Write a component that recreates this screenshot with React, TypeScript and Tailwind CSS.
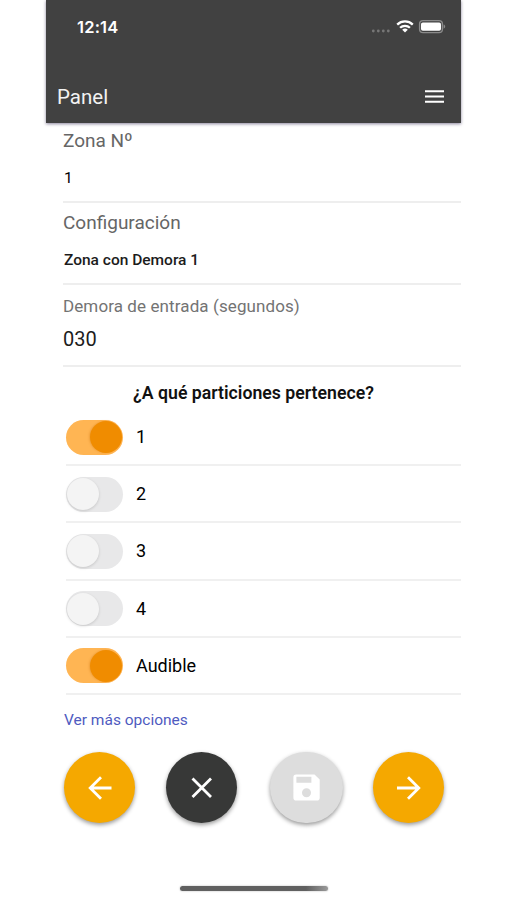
import React, { useState } from 'react';

const initialPartitions = [
  { id: 'p1', label: '1', enabled: true },
  { id: 'p2', label: '2', enabled: false },
  { id: 'p3', label: '3', enabled: false },
  { id: 'p4', label: '4', enabled: false },
  { id: 'audible', label: 'Audible', enabled: true },
];

const StatusBar = () => (
  <div className="flex items-center justify-between h-[53px] pl-[31px] pr-[15px]">
    <span className="font-['Inter',sans-serif] text-[16.5px] leading-5 font-semibold tracking-[0.2px]">12:14</span>
    <div className="flex items-center">
      <svg className="w-5 h-4 mr-[5px]" viewBox="0 0 20 16" fill="#777">
        <circle cx="2.3" cy="12" r="1.4" />
        <circle cx="7.3" cy="12" r="1.4" />
        <circle cx="12.3" cy="12" r="1.4" />
        <circle cx="17.3" cy="12" r="1.4" />
      </svg>
      <svg className="w-[18px] h-4 mr-1" viewBox="0 0 18 16" fill="none" stroke="#fff" strokeWidth="2.3">
        <path d="M1.2 5.6a11.2 11.2 0 0 1 15.6 0" />
        <path d="M4.1 8.8a7 7 0 0 1 9.8 0" />
        <path d="M9 13.5l-2.8-2.7a4 4 0 0 1 5.6 0z" fill="#fff" stroke="none" />
      </svg>
      <svg className="w-7 h-4" viewBox="0 0 28 16">
        <rect x="1.6" y="1.6" width="22.8" height="12" rx="3.4" fill="none" stroke="#8a8a8a" strokeWidth="1.4" />
        <rect x="3" y="3.4" width="20" height="8.4" rx="1.8" fill="#fff" />
        <path d="M25.6 5.5v4.2c.9-.3 1.6-1.1 1.6-2.1s-.7-1.8-1.6-2.1z" fill="#8a8a8a" />
      </svg>
    </div>
  </div>
);

const Toggle = ({ checked, onClick }: { checked: boolean; onClick: () => void }) => (
  <button
    role="switch"
    aria-checked={checked}
    onClick={onClick}
    className={`flex items-center w-[57px] h-[35px] rounded-full px-px ${
      checked ? 'bg-[#ffb553] justify-end' : 'bg-[#e8e8e9] justify-start'
    }`}
  >
    <span
      className={`w-[32px] h-[32px] rounded-full ${
        checked ? 'bg-[#f08c00] shadow-[-1px_0_2px_rgba(200,110,0,0.3)]' : 'bg-[#f4f4f4] shadow-[0_1px_3px_rgba(0,0,0,0.15)]'
      }`}
    />
  </button>
);

const App = () => {
  const [partitions, setPartitions] = useState(initialPartitions);

  const togglePartition = (id: string) => {
    setPartitions(partitions.map((p) => (p.id === id ? { ...p, enabled: !p.enabled } : p)));
  };

  return (
    <div className="h-[900px] bg-white flex justify-center overflow-hidden font-['Roboto',sans-serif] text-[#1c1c1c]">
      <div className="w-[415px] h-full flex flex-col">
        {/* Header */}
        <header className="h-[122.5px] shrink-0 bg-[#414141] text-white shadow-[0_1px_3px_rgba(60,50,90,0.6)]">
          <StatusBar />
          <div className="flex items-center justify-between h-[69px] pt-[18px] pl-[11px] pr-[17px]">
            <h1 className="text-[20.5px] leading-6 text-[#f2f2f2]">Panel</h1>
            <button aria-label="Menu">
              <svg className="w-5 h-4" viewBox="0 0 20 16" stroke="#fff" strokeWidth="2">
                <path d="M1 2.2h19M1 7.4h19M1 12.7h19" />
              </svg>
            </button>
          </div>
        </header>

        {/* Zone fields */}
        <div className="pl-[17px]">
          <div className="h-[80.5px] pt-[6px] border-b-2 border-[#eeeeee]">
            <p className="text-[19px] leading-6 text-[#666]">Zona Nº</p>
            <p className="pt-[15px] pl-px text-[15.5px] leading-5 text-black">1</p>
          </div>
          <div className="h-[82px] pt-[8px] border-b-2 border-[#eeeeee]">
            <p className="text-[19px] leading-6 text-[#666]">Configuración</p>
            <p className="pt-[15px] pl-px text-[15.5px] leading-5 font-medium">Zona con Demora 1</p>
          </div>
          <div className="h-[82px] pt-[11px] border-b-2 border-[#eeeeee]">
            <p className="text-[17px] leading-5 text-[#737373] tracking-[0.1px]">Demora de entrada (segundos)</p>
            <p className="pt-[10.5px] text-[20px] leading-6">030</p>
          </div>
        </div>

        {/* Partitions */}
        <h2 className="h-[42px] pt-[14px] text-center text-[17.7px] leading-6 font-semibold text-[#111]">
          ¿A qué particiones pertenece?
        </h2>
        <div className="pl-[20px]">
          {partitions.map((p) => (
            <div key={p.id} className="flex items-center gap-[13px] h-[57.2px] pt-px border-b-2 border-[#f0f0f0]">
              <Toggle checked={p.enabled} onClick={() => togglePartition(p.id)} />
              <span className="text-[18px] leading-6 text-black">{p.label}</span>
            </div>
          ))}
        </div>

        <a href="#" className="pt-[13px] pl-[18px] text-[15.5px] leading-6 text-[#4f5bbf]">Ver más opciones</a>

        {/* Action buttons */}
        <div className="flex items-center pt-[20.5px] pl-[18px]">
          <button aria-label="Anterior" className="w-[71px] h-[71px] mr-[31px] rounded-full bg-[#f5a800] flex items-center justify-center shadow-[0_2px_4px_rgba(0,0,0,0.4)]">
            <svg className="w-6 h-6" viewBox="0 0 24 24" fill="none" stroke="#fff" strokeWidth="2.8">
              <path d="M23.5 12H2M13 1.2L2.2 12L13 22.8" />
            </svg>
          </button>
          <button aria-label="Cancelar" className="w-[71px] h-[71px] mr-[33px] rounded-full bg-[#373837] flex items-center justify-center shadow-[0_2px_4px_rgba(0,0,0,0.4)]">
            <svg className="w-6 h-6" viewBox="0 0 24 24" fill="none" stroke="#fff" strokeWidth="2.8">
              <path d="M2.5 2.5l18.500 18.500M21 2.500l-18.500 18.500" />
            </svg>
          </button>
          <button aria-label="Guardar" className="w-[73px] h-[71px] mr-[30px] rounded-full bg-[#dddddd] flex items-center justify-center shadow-[0_2px_4px_rgba(0,0,0,0.4)]">
            <svg className="w-[27px] h-[27px]" viewBox="0 0 27 27" fill="#fff">
              <path fillRule="evenodd" d="M3.2 .5h18.3l5.2 5v18.200a2.800 2.800 0 0 1-2.800 2.800H3.200A2.800 2.800 0 0 1 .4 23.700V3.300A2.800 2.800 0 0 1 3.200 .5zM3.400 2.800v6h15v-6zM13.500 14.200a4.500 4.500 0 1 0 0 9a4.500 4.500 0 1 0 0-9z" />
            </svg>
          </button>
          <button aria-label="Siguiente" className="w-[71px] h-[71px] rounded-full bg-[#f5a800] flex items-center justify-center shadow-[0_2px_4px_rgba(0,0,0,0.4)]">
            <svg className="w-6 h-6" viewBox="0 0 24 24" fill="none" stroke="#fff" strokeWidth="2.8">
              <path d="M0 12h22M11 1.2L21.8 12L11 22.8" />
            </svg>
          </button>
        </div>

        {/* Home indicator */}
        <div className="mt-auto mb-[9px] ml-[134px] w-[148px] h-[5px] rounded-full bg-linear-to-r from-[#606060] from-85% to-[#9a9a9a] shadow-[0_0_2px_rgba(0,0,0,0.3)]" />
      </div>
    </div>
  );
};

export default App;
